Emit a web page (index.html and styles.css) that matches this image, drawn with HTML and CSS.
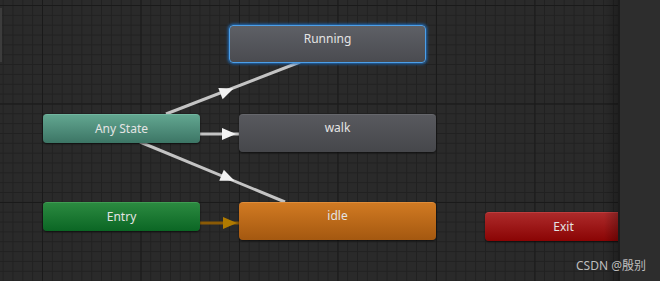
FILE: index.html
```html
<!DOCTYPE html>
<html lang="zh">
<head>
    <meta charset="UTF-8">
    <meta name="viewport" content="width=device-width, initial-scale=1.0">
    <title>Animator</title>
    <link rel="stylesheet" href="styles.css">
</head>
<body>
    <div class="window">
        <div class="graph">
            <div class="scroll-strip"></div>

            <svg class="links" width="618" height="281" viewBox="0 0 618 281">
                <!-- Any State -> Running -->
                <line class="link" x1="166" y1="114" x2="300" y2="62"/>
                <polygon class="head" points="-7,-6 7,0 -7,6" transform="translate(227 91) rotate(-21.2)"/>
                <!-- Any State -> walk -->
                <line class="link" x1="200" y1="134" x2="239" y2="134"/>
                <polygon class="head" points="-7,-6 7,0 -7,6" transform="translate(229 134)"/>
                <!-- Any State -> idle -->
                <line class="link" x1="140" y1="142" x2="285" y2="202"/>
                <polygon class="head" points="-7,-6 7,0 -7,6" transform="translate(228 178) rotate(22.5)"/>
                <!-- Entry -> idle -->
                <line class="link link-entry" x1="200" y1="223" x2="239" y2="223"/>
                <polygon class="head head-entry" points="-7,-6 7,0 -7,6" transform="translate(230 223)"/>
            </svg>

            <div class="node state selected" style="left:229px; top:25px;">Running</div>
            <div class="node state" style="left:239px; top:114px;">walk</div>
            <div class="node state default" style="left:239px; top:202px;">idle</div>
            <div class="node any" style="left:43px; top:114px;">Any State</div>
            <div class="node entry" style="left:43px; top:202px;">Entry</div>
            <div class="node exit" style="left:485px; top:212px;">Exit</div>
        </div>
        <div class="side-panel"></div>
        <div class="watermark">CSDN @殷别</div>
    </div>
</body>
</html>
```

FILE: styles.css
```css
body {
    margin: 0;
    padding: 0;
    background-color: #2b2b2b;
    font-family: 'Noto Sans', 'Open Sans', 'Noto Sans CJK SC', sans-serif;
    overflow: hidden;
}

.window {
    position: relative;
    display: flex;
    width: 660px;
    height: 281px;
}

.graph {
    position: relative;
    width: 618px;
    height: 281px;
    overflow: hidden;
    background-color: #2a2a2a;
    background-image:
        linear-gradient(#1a1a1a 1px, transparent 1px),
        linear-gradient(90deg, #1a1a1a 1px, transparent 1px),
        linear-gradient(#212121 1px, transparent 1px),
        linear-gradient(90deg, #212121 1px, transparent 1px);
    background-size: 98.5px 98.5px, 98.5px 98.5px, 9.85px 9.85px, 9.85px 9.85px;
    background-position: 42px 5px, 42px 5px, 42px 5px, 42px 5px;
}

.graph::after {
    content: '';
    position: absolute;
    top: 0;
    right: 0;
    width: 14px;
    height: 100%;
    background: linear-gradient(90deg, rgba(0,0,0,0), rgba(0,0,0,0.25));
    pointer-events: none;
}

.scroll-strip {
    position: absolute;
    left: 0;
    top: 8px;
    width: 2px;
    height: 54px;
    background-color: #3c3c3c;
}

.links {
    position: absolute;
    left: 0;
    top: 0;
}

.link {
    stroke: #c4c4c4;
    stroke-width: 3;
}

.head {
    fill: #f2f2f2;
}

.link-entry {
    stroke: #8a5a06;
}

.head-entry {
    fill: #b07a00;
}

.node {
    position: absolute;
    box-sizing: border-box;
    width: 157px;
    height: 29px;
    border-radius: 4px;
    color: #e4e4e4;
    font-size: 12px;
    line-height: 28px;
    text-align: center;
    box-shadow: 0 1px 2px rgba(0,0,0,0.6);
}

.state {
    width: 197px;
    height: 38px;
    line-height: 26px;
    background: linear-gradient(#58595e, #46474b);
    border-top: 1px solid #66676c;
}

.state.selected {
    border: 1px solid #4c9fe8;
    background: linear-gradient(#5e6066, #4a4b50);
    box-shadow: 0 0 3px 1px #1f6fc0;
}

.state.default {
    background: linear-gradient(#d17a22, #a45810);
    border-top: 1px solid #e08d3a;
}

.any {
    background: linear-gradient(#62a690, #3c7565);
    border-top: 1px solid #72b6a0;
}

.entry {
    background: linear-gradient(#2b8a40, #0b6624);
    border-top: 1px solid #3f9c52;
}

.exit {
    background: linear-gradient(#ad2a2a, #8a0404);
    border-top: 1px solid #bd3e3e;
}

.watermark {
    position: absolute;
    left: 576px;
    top: 256px;
    color: #bdbdbd;
    font-size: 12px;
    white-space: nowrap;
}

.side-panel {
    width: 40px;
    height: 281px;
    background-color: #2d2d2d;
    border-left: 2px solid #1b1b1b;
}
```
